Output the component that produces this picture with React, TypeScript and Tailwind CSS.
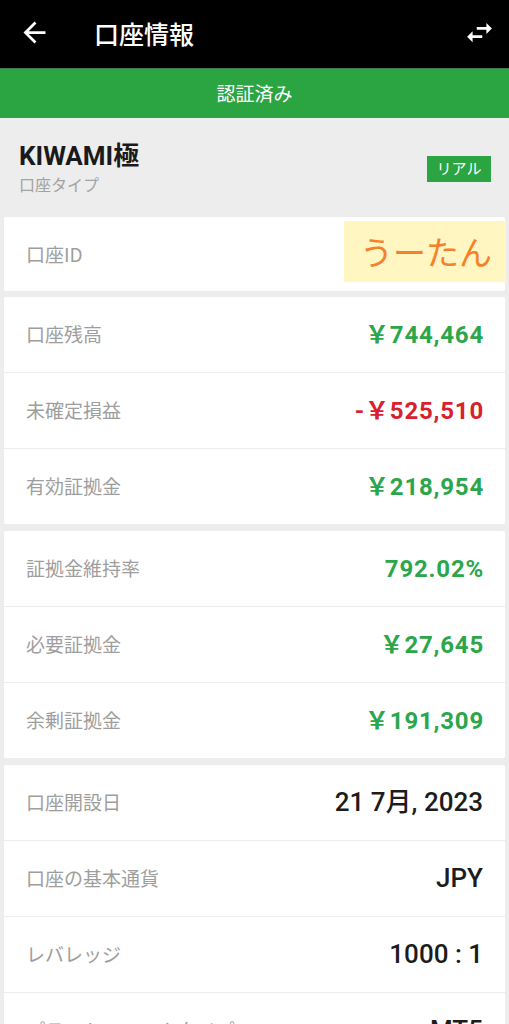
import React from "react";

const FONT = { fontFamily: "Roboto, 'Noto Sans CJK JP', sans-serif" };

type Row = { label: string; value: string; tone: "green" | "red" | "black" };

function Card({ rows, className = "" }: { rows: Row[]; className?: string }) {
  return (
    <div className={`mx-1 bg-white rounded-[2px] ${className}`}>
      {rows.map((r, i) => (
        <div
          key={r.label}
          className={`flex items-center justify-between pl-[22px] pr-[22px] ${
            i > 0 ? "h-[76px] border-t border-[#ececec]" : "h-[75px]"
          }`}
        >
          <span className="text-[19px] text-[#9e9e9e] font-['Noto_Sans_CJK_JP',sans-serif]">
            {r.label}
          </span>
          <span
            className={
              r.tone === "green"
                ? "text-[24px] tracking-[0.8px] mr-[-1px] text-[#2ca64a] font-bold"
                : r.tone === "red"
                ? "text-[24px] tracking-[0.8px] mr-[-1px] text-[#d8212f] font-bold"
                : "text-[26px] text-[#1c1c1c] font-medium"
            }
            style={FONT}
          >
            {r.value}
          </span>
        </div>
      ))}
    </div>
  );
}

export default function App() {
  return (
    <div className="w-[509px] h-[1024px] overflow-hidden bg-[#ededed]" style={FONT}>
      {/* Top bar */}
      <div className="h-[68px] bg-black flex items-center pl-[18px] pr-[13px]">
        <svg width="33" height="33" viewBox="0 0 24 24" fill="white" className="mt-[-3px]">
          <path d="M20 11H7.83l5.59-5.59L12 4l-8 8 8 8 1.41-1.41L7.83 13H20v-2z" />
        </svg>
        <span className="ml-[43px] text-white text-[25px] font-medium font-['Noto_Sans_CJK_JP',sans-serif]">
          口座情報
        </span>
        <div className="flex-1" />
        <svg width="33" height="33" viewBox="0 0 24 24" fill="white" className="mt-[-4px]">
          <path d="M6.99 11L3 15l3.99 4v-3H14v-2H6.99v-3zM21 9l-3.99-4v3H10v2h7.01v3L21 9z" />
        </svg>
      </div>
      <div className="h-px bg-[#3a7a44]" />
      {/* Verified banner */}
      <div className="h-[49px] bg-[#2ba442] flex items-center justify-center">
        <span className="text-white text-[19px] font-['Noto_Sans_CJK_JP',sans-serif]">認証済み</span>
      </div>
      {/* Account type */}
      <div className="h-[99px] flex items-center justify-between pl-[19px] pr-[18px]">
        <div className="flex flex-col">
          <span className="text-[26px] font-bold text-[#1a1a1a] leading-[30px]" style={FONT}>
            KIWAMI極
          </span>
          <span className="text-[16px] text-[#a3a3a3] leading-[22px] mt-[2px] font-['Noto_Sans_CJK_JP',sans-serif]">
            口座タイプ
          </span>
        </div>
        <div className="w-[64px] h-[26px] bg-[#2ba442] flex items-center justify-center mt-[2px]">
          <span className="text-white text-[15px] font-['Noto_Sans_CJK_JP',sans-serif]">リアル</span>
        </div>
      </div>
      {/* Account ID */}
      <div className="relative mx-1 bg-white rounded-[2px] h-[74px] flex items-center pl-[22px]">
        <span className="text-[19px] text-[#9e9e9e] font-['Noto_Sans_CJK_JP',sans-serif]">口座ID</span>
        <div className="absolute right-[-1px] top-[4px] w-[162px] h-[61px] bg-[#fff6c2] flex items-center justify-center pl-[2px]">
          <span className="text-[33px] text-[#f5822a] font-['Noto_Sans_CJK_JP',sans-serif] leading-none">
            うーたん
          </span>
        </div>
      </div>
      <Card
        className="mt-[6px]"
        rows={[
          { label: "口座残高", value: "￥744,464", tone: "green" },
          { label: "未確定損益", value: "-￥525,510", tone: "red" },
          { label: "有効証拠金", value: "￥218,954", tone: "green" },
        ]}
      />
      <Card
        className="mt-[7px]"
        rows={[
          { label: "証拠金維持率", value: "792.02%", tone: "green" },
          { label: "必要証拠金", value: "￥27,645", tone: "green" },
          { label: "余剰証拠金", value: "￥191,309", tone: "green" },
        ]}
      />
      <Card
        className="mt-[7px]"
        rows={[
          { label: "口座開設日", value: "21 7月, 2023", tone: "black" },
          { label: "口座の基本通貨", value: "JPY", tone: "black" },
          { label: "レバレッジ", value: "1000 : 1", tone: "black" },
          { label: "プラットフォームタイプ", value: "MT5", tone: "black" },
        ]}
      />
    </div>
  );
}
